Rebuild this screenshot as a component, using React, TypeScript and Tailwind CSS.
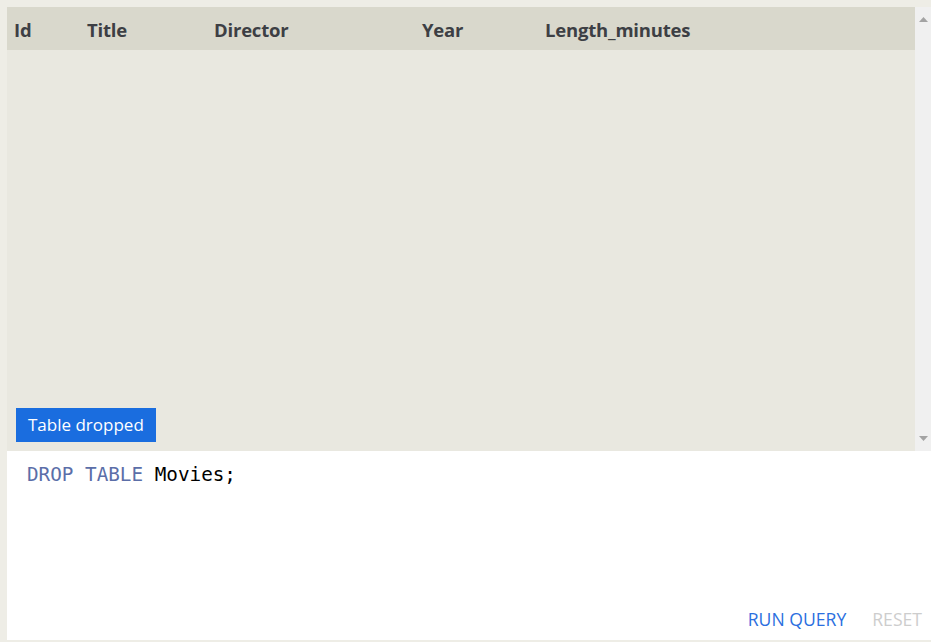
import React from 'react';

const columns = [
  { name: 'Id', width: 'w-[73px]' },
  { name: 'Title', width: 'w-[127px]' },
  { name: 'Director', width: 'w-[208px]' },
  { name: 'Year', width: 'w-[123px]' },
  { name: 'Length_minutes', width: 'flex-1' },
];

const App: React.FC = () => {
  return (
    <div className="w-[931px] h-[642px] bg-[#eeede6] pl-[7px] pt-[7px] pb-[2px] flex flex-col font-['Open_Sans',sans-serif] overflow-hidden">
      {/* Results */}
      <div className="h-[444px] flex">
        <div className="flex-1 flex flex-col bg-[#e9e8e0]">
          <div className="h-[43px] bg-[#d9d8cc] flex items-center pt-[3px]">
            {columns.map((c) => (
              <div key={c.name} className={`${c.width} px-[7px] text-[18.5px] font-bold text-[#3d3f44] tracking-[-0.2px]`}>
                {c.name}
              </div>
            ))}
          </div>
          <div className="flex-1 flex flex-col justify-end pl-[9px] pb-[9px]">
            <div className="self-start h-[34px] px-[12px] flex items-center bg-[#1a6ddf] text-white text-[17px]">
              Table dropped
            </div>
          </div>
        </div>
        <div className="w-[16px] bg-[#f0f0f0] flex flex-col justify-between items-center py-[10px]">
          <svg width="9" height="5" viewBox="0 0 9 5"><path d="M4.5 0L9 5H0z" fill="#a3a3a3" /></svg>
          <svg width="9" height="5" viewBox="0 0 9 5"><path d="M0 0h9L4.5 5z" fill="#a3a3a3" /></svg>
        </div>
      </div>

      {/* Editor */}
      <div className="flex-1 bg-white flex flex-col justify-between">
        <div className="pl-[20px] pt-[10px] font-['DejaVu_Sans_Mono',monospace] text-[19.3px] text-black">
          <span className="text-[#5b6ea8]">DROP TABLE</span> Movies;
        </div>
        <div className="flex justify-end gap-[26px] pr-[9px] pb-[8px] text-[17.6px]">
          <button className="text-[#2b6fe0]">RUN QUERY</button>
          <button className="text-[#cdcdcd]">RESET</button>
        </div>
      </div>
    </div>
  );
};

export default App;
